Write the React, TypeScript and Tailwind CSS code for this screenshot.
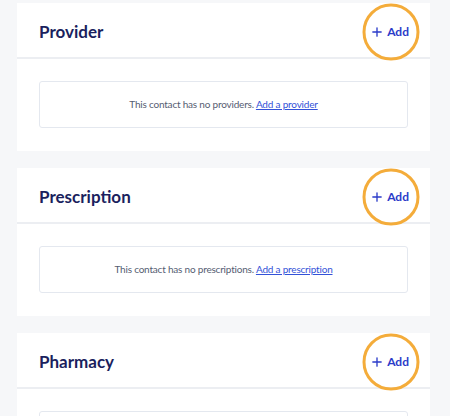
const sections = [
  { title: "Provider", empty: "This contact has no providers.", link: "Add a provider" },
  { title: "Prescription", empty: "This contact has no prescriptions.", link: "Add a prescription" },
  { title: "Pharmacy", empty: "This contact has no pharmacies.", link: "Add a pharmacy" },
];

function PlusIcon() {
  return (
    <svg className="h-[10px] w-[10px]" viewBox="0 0 12 12" fill="none" stroke="currentColor" strokeWidth={1.6} strokeLinecap="round">
      <path d="M6 1v10M1 6h10" />
    </svg>
  );
}

function Section({ title, empty, link }: { title: string; empty: string; link: string }) {
  return (
    <div className="bg-white">
      <div className="flex h-[56px] items-center justify-between border-b-2 border-[#eceef2] pl-[22px] pr-[21px] pt-[3px]">
        <h2 className="text-[17px] font-bold text-[#1b1f5e]">{title}</h2>
        <div className="relative flex items-center">
          <button className="flex items-center gap-[5px] text-[12px] font-bold text-[#2b3bc9]">
            <PlusIcon />
            Add
          </button>
          <span className="pointer-events-none absolute left-1/2 top-1/2 h-[57px] w-[57px] -translate-x-1/2 -translate-y-1/2 rounded-full border-[3px] border-[#f4ac3a]" />
        </div>
      </div>
      <div className="px-[22px] pb-[23px] pt-[22px]">
        <div className="flex h-[47px] items-center justify-center rounded-[3px] border border-[#e4e8ef] text-[10px] tracking-[-0.2px] text-[#555d72]">
          <span>
            {empty}{" "}
            <a href="#" className="text-[#3352d8] underline">
              {link}
            </a>
          </span>
        </div>
      </div>
    </div>
  );
}

export default function App() {
  return (
    <div
      className="h-[416px] w-[450px] overflow-hidden bg-[#f6f7f9] pl-[17px] pr-[20px] pt-[3px]"
      style={{ fontFamily: "Lato, 'Noto Sans', sans-serif" }}
    >
      <div className="flex flex-col gap-[17px]">
        {sections.map((s) => (
          <Section key={s.title} {...s} />
        ))}
      </div>
    </div>
  );
}
